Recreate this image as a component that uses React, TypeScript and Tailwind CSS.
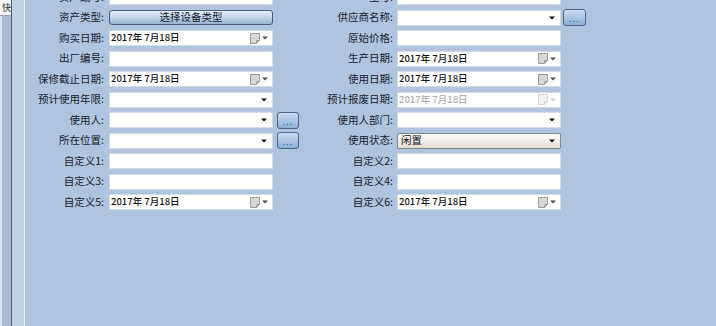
import React from "react";

const FONT = { fontFamily: '"Noto Sans CJK SC", "Noto Sans", sans-serif' };

type Field =
  | { kind: "text" }
  | { kind: "select" }
  | { kind: "date"; disabled?: boolean }
  | { kind: "typeButton" }
  | { kind: "combo"; value: string };

type Row = {
  left: string;
  leftField: Field;
  leftMore?: boolean;
  right: string;
  rightField: Field;
  rightMore?: boolean;
};

const rows: Row[] = [
  { left: "资产编号:", leftField: { kind: "text" }, right: "型号:", rightField: { kind: "select" } },
  { left: "资产类型:", leftField: { kind: "typeButton" }, right: "供应商名称:", rightField: { kind: "select" }, rightMore: true },
  { left: "购买日期:", leftField: { kind: "date" }, right: "原始价格:", rightField: { kind: "text" } },
  { left: "出厂编号:", leftField: { kind: "text" }, right: "生产日期:", rightField: { kind: "date" } },
  { left: "保修截止日期:", leftField: { kind: "date" }, right: "使用日期:", rightField: { kind: "date" } },
  { left: "预计使用年限:", leftField: { kind: "select" }, right: "预计报废日期:", rightField: { kind: "date", disabled: true } },
  { left: "使用人:", leftField: { kind: "select" }, leftMore: true, right: "使用人部门:", rightField: { kind: "select" } },
  { left: "所在位置:", leftField: { kind: "select" }, leftMore: true, right: "使用状态:", rightField: { kind: "combo", value: "闲置" } },
  { left: "自定义1:", leftField: { kind: "text" }, right: "自定义2:", rightField: { kind: "text" } },
  { left: "自定义3:", leftField: { kind: "text" }, right: "自定义4:", rightField: { kind: "text" } },
  { left: "自定义5:", leftField: { kind: "date" }, right: "自定义6:", rightField: { kind: "date" } },
];

function DownArrow({ color = "#111" }: { color?: string }) {
  return (
    <svg width="6" height="4" viewBox="0 0 6 4">
      <path d="M0 0.5h6L3 3.5z" fill={color} />
    </svg>
  );
}

function CalendarIcon({ disabled }: { disabled?: boolean }) {
  const stroke = disabled ? "#d6d6d6" : "#9a9a9a";
  const fill = disabled ? "#f2f2f2" : "#d8d8d8";
  return (
    <svg width="10" height="11" viewBox="0 0 10 11">
      <path d="M0.5 0.5h9v7l-3 3h-6z" fill={fill} stroke={stroke} />
      <path d="M6.5 10.5v-3h3" fill="none" stroke={stroke} />
    </svg>
  );
}

function Input({ field }: { field: Field }) {
  if (field.kind === "typeButton") {
    return (
      <div className="h-full flex items-center">
        <div className="w-full h-[15px] rounded-[3px] border border-[#4b5f7a] bg-gradient-to-b from-[#e6edf7] via-[#c2d2e7] to-[#9ab3d3] flex items-center justify-center text-[10.5px] leading-none text-[#16202e]">
          选择设备类型
        </div>
      </div>
    );
  }
  if (field.kind === "combo") {
    return (
      <div className="h-full rounded-[2px] border border-[#7f8792] bg-gradient-to-b from-[#fdfdfd] to-[#e3ded4] flex items-center pl-[3px] pr-[5px]">
        <span className="flex-1 text-[10.5px] leading-none text-[#111]">{field.value}</span>
        <DownArrow />
      </div>
    );
  }
  return (
    <div className="h-full bg-white border border-[#d3dbe6] flex items-center pl-[1px] pr-[4px]">
      <span
        className={`flex-1 text-[9.5px] leading-none font-medium whitespace-nowrap ${
          field.kind === "date" && field.disabled ? "text-[#b0b0b0]" : "text-[#151515]"
        }`}
      >
        {field.kind === "date" ? "2017年 7月18日" : ""}
      </span>
      {field.kind === "select" && (
        <span className="pr-[1px]">
          <DownArrow />
        </span>
      )}
      {field.kind === "date" && (
        <span className="flex items-center gap-[2px]">
          <CalendarIcon disabled={field.disabled} />
          <DownArrow color={field.disabled ? "#cfcfcf" : "#555"} />
        </span>
      )}
    </div>
  );
}

function MoreButton({ wide }: { wide?: boolean }) {
  return (
    <div
      className={`h-[17px] ${wide ? "w-[23px]" : "w-[22px]"} rounded-[3px] border border-[#4f6686] bg-gradient-to-b from-[#cddcf0] to-[#8eaed6] flex items-end justify-center pb-[2px]`}
    >
      <span className="text-[9px] leading-none tracking-[1px] text-[#3a5f94]">...</span>
    </div>
  );
}

function Label({ text, pr }: { text: string; pr: string }) {
  return (
    <div
      className={`flex items-center justify-end ${pr} text-[10.5px] leading-none text-[#17212e] whitespace-nowrap`}
    >
      {text}
    </div>
  );
}

export default function App() {
  return (
    <div className="w-[716px] h-[326px] overflow-hidden bg-[#b0c4de] flex" style={FONT}>
      {/* left edge strip */}
      <div className="flex h-full shrink-0">
        <div className="w-[2px] bg-[#dce6f2]" />
        <div className="w-[9px] bg-[#a9bad2] flex flex-col">
          <div className="h-[16px] -ml-[2px] w-[11px] bg-[#f4f6f9] border-b border-[#8e9bb0] overflow-hidden flex items-center justify-end text-[9px] leading-none text-[#333]">
            快
          </div>
        </div>
        <div className="w-[1px] bg-[#4e5c72]" />
        <div className="w-[12px] bg-[#c0d0e5]" />
        <div className="w-[1px] bg-[#eaf0f7]" />
      </div>

      {/* form */}
      <div className="flex-1">
        <div className="-mt-[11px] grid grid-cols-[84px_164px_27px_97px_164px_25px] auto-rows-[16px] gap-y-[4.5px]">
          {rows.map((r, i) => (
            <React.Fragment key={i}>
              <Label text={r.left} pr="pr-[5px]" />
              <Input field={r.leftField} />
              <div className="pl-[4px] flex items-center">{r.leftMore && <MoreButton />}</div>
              <Label text={r.right} pr="pr-[4px]" />
              <Input field={r.rightField} />
              <div className="pl-[2px] flex items-center">{r.rightMore && <MoreButton wide />}</div>
            </React.Fragment>
          ))}
        </div>
      </div>
    </div>
  );
}
